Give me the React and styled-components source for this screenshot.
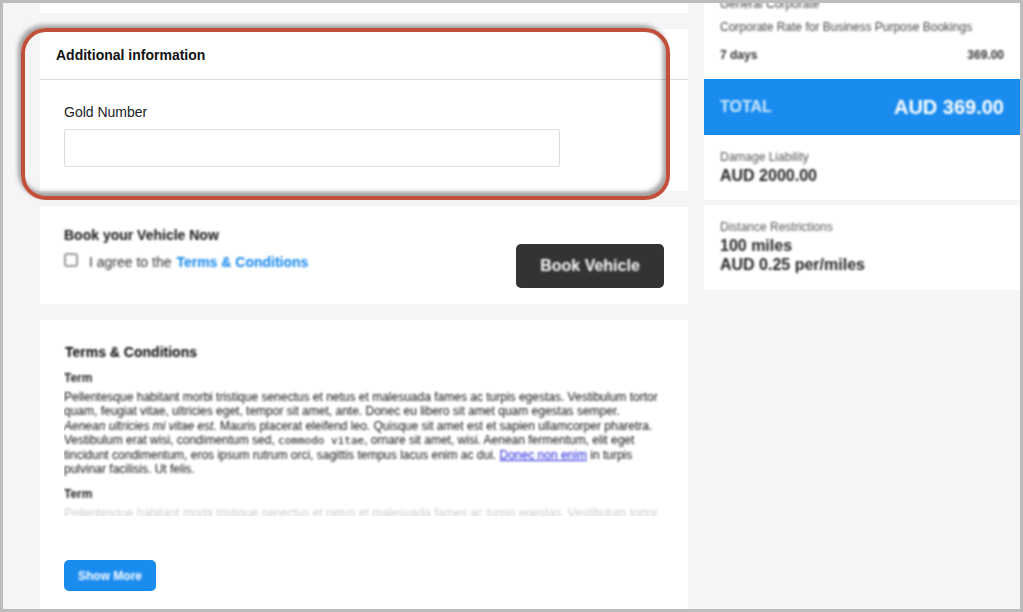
import React from "react"
import styled, {createGlobalStyle, css} from "styled-components"

const GlobalStyle = createGlobalStyle`
  html, body {
    margin: 0;
    padding: 0;
    background: #f5f5f5;
  }
  body {
    font-family: "Liberation Sans", Arial, sans-serif;
    color: #222;
  }
`

const soft = css`
  filter: blur(0.8px);
`

const softer = css`
  filter: blur(1.1px);
`

const Frame = styled.div`
  position: relative;
  box-sizing: border-box;
  width: 1023px;
  height: 612px;
  overflow: hidden;
  border: 3px solid #bcbcbc;
  background: #f5f5f5;
`

const Columns = styled.div`
  display: grid;
  grid-template-columns: 648px 316px;
  gap: 16px;
  padding-left: 37px;
  align-items: start;
`

const MainColumn = styled.div`
  display: flex;
  flex-direction: column;
  gap: 16px;
`

const Card = styled.section`
  background: #fff;
`

const StubCard = styled(Card)`
  height: 10px;
`

const InfoHeader = styled.div`
  height: 51px;
  padding: 2px 0 0 16px;
  box-sizing: border-box;
  display: flex;
  align-items: center;
  border-bottom: 1px solid #dcdcdc;
  font-size: 14px;
  font-weight: bold;
  color: #111;
`

const InfoBody = styled.div`
  padding: 23px 24px 24px;
  height: 111px;
  box-sizing: border-box;
`

const FieldLabel = styled.label`
  display: block;
  font-size: 14px;
  line-height: 18px;
  color: #222;
  margin-bottom: 8px;
`

const TextInput = styled.input`
  display: block;
  box-sizing: border-box;
  width: 496px;
  height: 38px;
  background: #fff;
  border: 1px solid #dcdcdc;
  border-radius: 3px;
`

const BookCard = styled(Card)`
  height: 97px;
  box-sizing: border-box;
  padding: 20px 24px 0;
  display: flex;
  justify-content: space-between;
`

const BookTitle = styled.div`
  ${soft}
  font-size: 14px;
  line-height: 16px;
  font-weight: bold;
  color: #111;
  margin-bottom: 9px;
`

const AgreeRow = styled.div`
  ${soft}
  display: flex;
  align-items: flex-start;
  gap: 11px;
  font-size: 14px;
  line-height: 16px;
  color: #333;
`

const AgreeText = styled.span`
  margin-top: 2px;
`

const CheckBox = styled.span`
  box-sizing: border-box;
  flex: none;
  width: 14px;
  height: 14px;
  margin-top: 1px;
  border: 2px solid #999;
  border-radius: 3px;
  background: #fff;
`

const TermsLink = styled.a`
  margin-left: 1px;
  color: #0f85ef;
  font-weight: bold;
`

const BookButton = styled.button`
  margin-top: 17px;
  width: 148px;
  height: 44px;
  border: 0;
  border-radius: 5px;
  background: #333;
  color: #fff;
  font-family: inherit;
  font-size: 16px;
  font-weight: bold;
  span {
    display: block;
    ${soft}
  }
`

const TermsCard = styled(Card)`
  position: relative;
  height: 289px;
  box-sizing: border-box;
  padding: 24px 24px 0;
`

const TermsTitle = styled.h3`
  ${soft}
  margin: 0 0 10px 1px;
  font-size: 14px;
  line-height: 16px;
  font-weight: bold;
  color: #000;
`

const TermHeading = styled.h4`
  ${soft}
  margin: 0 0 4px;
  font-size: 12px;
  line-height: 16px;
  font-weight: bold;
  color: #222;
`

const TermText = styled.p`
  ${soft}
  margin: 0 0 10px;
  width: 600px;
  font-size: 12px;
  line-height: 14.4px;
  color: #111;
  code {
    font-family: "DejaVu Sans Mono", monospace;
    font-size: 11px;
    line-height: 1;
  }
  a {
    color: #1a1add;
  }
`

const TermsClip = styled.div`
  position: relative;
  height: 146px;
  overflow: hidden;
`

const FadeOut = styled.div`
  position: absolute;
  left: 0;
  right: 0;
  bottom: 0;
  height: 12px;
  background: rgba(255, 255, 255, 0.78);
`

const ShowMore = styled.button`
  position: absolute;
  left: 24px;
  top: 240px;
  width: 92px;
  height: 31px;
  border: 0;
  border-radius: 5px;
  background: #1a8cf0;
  color: #fff;
  font-family: inherit;
  font-size: 12px;
  font-weight: bold;
  span {
    display: block;
    ${soft}
  }
`

const SideColumn = styled.aside`
  display: flex;
  flex-direction: column;
  margin-top: -6px;
`

const RateCard = styled(Card)`
  height: 82px;
  box-sizing: border-box;
  padding: 0 16px;
`

const RateName = styled.div`
  ${softer}
  font-size: 12px;
  line-height: 14px;
  color: #444;
  margin-bottom: 9px;
`

const RateRow = styled.div`
  ${softer}
  display: flex;
  justify-content: space-between;
  margin-top: 14px;
  font-size: 12px;
  line-height: 14px;
  font-weight: bold;
  color: #333;
`

const TotalBar = styled.div`
  height: 56px;
  box-sizing: border-box;
  padding: 0 16px;
  display: flex;
  justify-content: space-between;
  align-items: center;
  background: #1a8cf0;
  color: #fff;
  font-weight: bold;
`

const TotalLabel = styled.span`
  ${softer}
  font-size: 16px;
  color: #cfe8fd;
`

const TotalAmount = styled.span`
  ${softer}
  font-size: 20px;
`

const FactCard = styled(Card)`
  height: ${p => p.$height}px;
  box-sizing: border-box;
  padding: 15px 16px 0;
  margin-bottom: 5px;
`

const FactLabel = styled.div`
  ${softer}
  font-size: 12px;
  line-height: 14px;
  color: #555;
  margin-bottom: 2px;
`

const FactValue = styled.div`
  ${softer}
  font-size: 16px;
  line-height: 19px;
  font-weight: bold;
  color: #222;
`

const Highlight = styled.div`
  position: absolute;
  left: 18px;
  top: 25px;
  width: 649px;
  height: 172px;
  box-sizing: border-box;
  border: 4px solid #c0503a;
  border-radius: 25px;
  box-shadow: -3px -3px 4px rgba(0, 0, 0, 0.34), inset -3px -4px 4px rgba(0, 0, 0, 0.36);
  pointer-events: none;
`

const App = () => {
  return (
    <Frame>
      <GlobalStyle/>
      <Columns>
        <MainColumn>
          <StubCard/>
          <Card>
            <InfoHeader>Additional information</InfoHeader>
            <InfoBody>
              <FieldLabel>Gold Number</FieldLabel>
              <TextInput type="text"/>
            </InfoBody>
          </Card>
          <BookCard>
            <div>
              <BookTitle>Book your Vehicle Now</BookTitle>
              <AgreeRow>
                <CheckBox/>
                <AgreeText>I agree to the <TermsLink>Terms &amp; Conditions</TermsLink></AgreeText>
              </AgreeRow>
            </div>
            <BookButton><span>Book Vehicle</span></BookButton>
          </BookCard>
          <TermsCard>
            <TermsTitle>Terms &amp; Conditions</TermsTitle>
            <TermsClip>
              <TermHeading>Term</TermHeading>
              <TermText>
                Pellentesque habitant morbi tristique senectus et netus et malesuada fames ac turpis egestas. Vestibulum tortor
                quam, feugiat vitae, ultricies eget, tempor sit amet, ante. Donec eu libero sit amet quam egestas semper.{" "}
                <em>Aenean ultricies mi vitae est.</em> Mauris placerat eleifend leo. Quisque sit amet est et sapien ullamcorper
                pharetra. Vestibulum erat wisi, condimentum sed, <code>commodo vitae</code>, ornare sit amet, wisi. Aenean
                fermentum, elit eget tincidunt condimentum, eros ipsum rutrum orci, sagittis tempus lacus enim ac dui.{" "}
                <a href="#">Donec non enim</a> in turpis pulvinar facilisis. Ut felis.
              </TermText>
              <TermHeading>Term</TermHeading>
              <TermText>
                Pellentesque habitant morbi tristique senectus et netus et malesuada fames ac turpis egestas. Vestibulum tortor
              </TermText>
              <FadeOut/>
            </TermsClip>
            <ShowMore><span>Show More</span></ShowMore>
          </TermsCard>
        </MainColumn>
        <SideColumn>
          <RateCard>
            <RateName>General Corporate</RateName>
            <RateName>Corporate Rate for Business Purpose Bookings</RateName>
            <RateRow><span>7 days</span><span>369.00</span></RateRow>
          </RateCard>
          <TotalBar>
            <TotalLabel>TOTAL</TotalLabel>
            <TotalAmount>AUD 369.00</TotalAmount>
          </TotalBar>
          <FactCard $height={65}>
            <FactLabel>Damage Liability</FactLabel>
            <FactValue>AUD 2000.00</FactValue>
          </FactCard>
          <FactCard $height={85}>
            <FactLabel>Distance Restrictions</FactLabel>
            <FactValue>100 miles</FactValue>
            <FactValue>AUD 0.25 per/miles</FactValue>
          </FactCard>
        </SideColumn>
      </Columns>
      <Highlight/>
    </Frame>
  )
}

export default App
